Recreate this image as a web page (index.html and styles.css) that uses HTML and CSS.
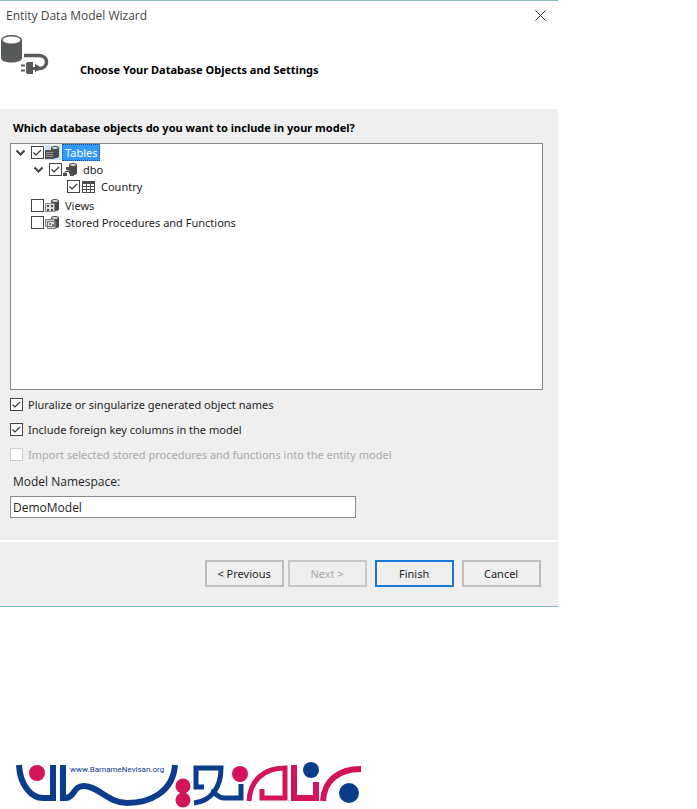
FILE: index.html
```html
<!DOCTYPE html>
<html lang="en">
<head>
  <meta charset="UTF-8">
  <meta name="viewport" content="width=device-width, initial-scale=1.0">
  <title>Entity Data Model Wizard</title>
  <link rel="stylesheet" href="styles.css">
</head>
<body>
  <form class="wizard">
    <div class="titlebar">
      <span>Entity Data Model Wizard</span>
      <button type="button" class="close" aria-label="Close">
        <svg width="11" height="11" viewBox="0 0 11 11"><path d="M.5 .5l10 10M10.5 .5l-10 10" stroke="#333" fill="none"/></svg>
      </button>
    </div>

    <header class="step">
      <svg width="50" height="44" viewBox="0 0 50 44">
        <path d="M1 6v18c0 6 21 6 21 0V6z" fill="#58595b"/>
        <ellipse cx="11.5" cy="6" rx="10.5" ry="5" fill="#58595b"/>
        <ellipse cx="11.5" cy="6" rx="9" ry="3.5" fill="#fff"/>
        <path d="M24 21.500h15c10 0 10 13 0 13h-2" fill="none" stroke="#58595b" stroke-width="3.500"/>
        <path d="M26 29h1v-1h6v12h-6v-1h-1zM33 33h2v3h-2zM35 30l4 2v4l-4 2zM21 30.500h4v2h-4zM21 35.500h4v2h-4z" fill="#58595b"/>
      </svg>
      <h1>Choose Your Database Objects and Settings</h1>
    </header>

    <div class="content">
      <h2>Which database objects do you want to include in your model?</h2>

      <ul class="tree">
        <li>
          <div class="node">
            <svg class="arrow" viewBox="0 0 9 9"><path d="M.5 2.500l4 4 4-4"/></svg>
            <input type="checkbox" id="tables" checked>
            <svg class="icon lit" viewBox="0 0 16 15"><use href="#db"/><path d="M0 5h9v9H0z" fill="#505053"/><path d="M1 7.500h7M1 9.500h7M1 11.500h7" stroke="#8d9399"/></svg>
            <label for="tables" class="selected">Tables</label>
          </div>
          <ul>
            <li>
              <div class="node">
                <svg class="arrow" viewBox="0 0 9 9"><path d="M.5 2.500l4 4 4-4"/></svg>
                <input type="checkbox" id="dbo" checked>
                <svg class="icon" viewBox="0 0 16 15"><use href="#db"/><path d="M3 5h4v3H3zM0 11h4v3H0zM7 11h4v3H7z" fill="#505053"/><path d="M5 8v2M2 11v-1.500h7v1.500" fill="none" stroke="#505053"/></svg>
                <label for="dbo">dbo</label>
              </div>
              <ul>
                <li>
                  <div class="node">
                    <span class="arrow"></span>
                    <input type="checkbox" id="country" checked>
                    <svg class="icon" viewBox="0 0 16 15"><path d="M1 2h13v12H1z" fill="#4a4a4d"/><path d="M2 5h3v2H2zM6 5h3v2H6zM10 5h3v2h-3zM2 8h3v2H2zM6 8h3v2H6zM10 8h3v2h-3zM2 11h3v2H2zM6 11h3v2H6zM10 11h3v2h-3z" fill="#fff"/></svg>
                    <label for="country">Country</label>
                  </div>
                </li>
              </ul>
            </li>
          </ul>
        </li>
        <li>
          <div class="node">
            <span class="arrow"></span>
            <input type="checkbox" id="views">
            <svg class="icon" viewBox="0 0 16 15"><use href="#db"/><path d="M.5 5.500h9v8h-9z" fill="#ddd" stroke="#888"/><path d="M2 7h2v2H2zM6 7h2v2H6zM2 11h2v2H2zM6 11h2v2H6z" fill="#505053"/></svg>
            <label for="views">Views</label>
          </div>
        </li>
        <li>
          <div class="node">
            <span class="arrow"></span>
            <input type="checkbox" id="procs">
            <svg class="icon" viewBox="0 0 16 15"><use href="#db"/><path d="M.5 4.500h9v7h-9zM2.500 6.500h8v7h-8z" fill="#ddd" stroke="#777"/><path d="M4 8h2v2H4zM7 9h2v3H7z" fill="#777"/></svg>
            <label for="procs">Stored Procedures and Functions</label>
          </div>
        </li>
      </ul>

      <div class="option">
        <input type="checkbox" id="pluralize" checked>
        <label for="pluralize">Pluralize or singularize generated object names</label>
      </div>
      <div class="option">
        <input type="checkbox" id="foreign" checked>
        <label for="foreign">Include foreign key columns in the model</label>
      </div>
      <div class="option">
        <input type="checkbox" id="import" disabled>
        <label for="import">Import selected stored procedures and functions into the entity model</label>
      </div>

      <label class="namespace-label" for="namespace">Model Namespace:</label>
      <input type="text" class="namespace" id="namespace" value="DemoModel">
    </div>

    <footer class="actions">
      <button type="button">&lt; Previous</button>
      <button type="button" disabled>Next &gt;</button>
      <button type="submit" class="primary">Finish</button>
      <button type="button">Cancel</button>
    </footer>
  </form>

  <svg class="logo" width="352" height="47" viewBox="14 762 352 47" role="img" aria-label="Barname Nevisan">
    <g fill="none" stroke="#0b3d8c" stroke-width="6">
      <path d="M19 765C20 786 32 798 43 798H53V765"/>
      <path d="M63 765V798H66C75 797 73 786 84 786C98 786 108 803 127 803C150 803 173 792 175 765"/>
      <path d="M204 787H196V768H221C221 788 211 801 194 803M211 791C216 793 218 798 224 798H241V784" stroke-width="5"/>
    </g>
    <g fill="none" stroke="#d3145a" stroke-width="6">
      <path d="M249 801C250 782 262 768 285 768V798H262V789" stroke-width="5"/>
      <path d="M294 765V798H316V782M323 801C324 781 338 769 361 769"/>
    </g>
    <g fill="#d3145a">
      <circle cx="37" cy="773" r="8"/>
      <circle cx="183" cy="786" r="7.5"/>
      <circle cx="183" cy="800" r="7.5"/>
      <circle cx="240" cy="774" r="8"/>
    </g>
    <g fill="#0b3d8c">
      <circle cx="311" cy="770" r="8"/>
      <circle cx="349" cy="793" r="10"/>
    </g>
    <text x="70" y="772">www.BarnameNevisan.org</text>
  </svg>

  <!-- shared database cylinder for the tree icons -->
  <svg width="0" height="0" class="defs">
    <defs>
      <g id="db">
        <path d="M6 3v8c0 3 8 3 8 0V3z" fill="#4a4a4d"/>
        <ellipse cx="10" cy="3" rx="4" ry="2" fill="#4a4a4d"/>
        <ellipse cx="10" cy="3" rx="3" ry="1" fill="#ddd"/>
      </g>
    </defs>
  </svg>
</body>
</html>
```
FILE: styles.css
```css
* {
  box-sizing: border-box;
}
body {
  margin: 0;
  background: #fff;
  color: #1e1e1e;
  font: 11px/17px "Noto Sans", "Open Sans", sans-serif;
}
h1, h2 {
  margin: 0;
  font-size: 11px;
  color: #000;
}
ul {
  list-style: none;
  margin: 0;
  padding: 0;
}
svg {
  display: block;
}
.wizard {
  width: 80%;
  border-top: 1px solid #8fb9bb;
  border-bottom: 1px solid #7fc4c4;
}
.titlebar {
  display: flex;
  justify-content: space-between;
  align-items: center;
  height: 29px;
  padding: 0 12px 0 6px;
  color: #444;
  font: 12px/17px "Open Sans", sans-serif;
}
.close {
  padding: 0;
  border: none;
  background: none;
}
.step {
  display: flex;
  gap: 30px;
  height: 79px;
  padding-top: 4px;
}
.step h1 {
  padding-top: 27px;
}
.content {
  padding: 10px 15px 22px 10px;
  background: #efefef;
}
.content h2 {
  padding: 0 0 7px 3px;
}

/* objects tree */
.tree {
  height: 247px;
  margin-bottom: 5px;
  padding: 0 5px;
  border: 1px solid #828790;
  background: #fff;
}
.tree ul {
  padding: 0 0 1px 18px;
}
.node {
  display: flex;
  align-items: center;
  height: 17px;
}
.arrow {
  width: 9px;
  height: 9px;
  margin-right: 6px;
  fill: none;
  stroke: #444;
  stroke-width: 2;
}
.icon {
  width: 16px;
  height: 15px;
  margin: 0 1px;
}
.lit {
  background: #cce4f7;
}
.node label {
  padding: 0 3px;
}
.node .selected {
  background: #3399ff;
  color: #fff;
  outline: 1px dotted #1b4f86;
  outline-offset: -1px;
}

input[type="checkbox"] {
  appearance: none;
  flex: none;
  width: 13px;
  height: 13px;
  margin: 0;
  border: 1px solid #444;
  background: #fff;
}
input[type="checkbox"]:checked {
  background: #fff url("data:image/svg+xml,%3Csvg xmlns='http://www.w3.org/2000/svg' viewBox='0 0 11 11'%3E%3Cpath d='M1.500 5.500l2.500 2.500 5-5' fill='none' stroke='%23333' stroke-width='1.200'/%3E%3C/svg%3E");
}
input[type="checkbox"]:disabled {
  border-color: #ccc;
}
.option {
  display: flex;
  align-items: center;
  gap: 5px;
  height: 18px;
  margin-bottom: 7px;
}
input:disabled + label {
  color: #aaa;
}
.namespace-label {
  display: block;
  padding: 3px 3px 6px;
  font: 12px/17px "Open Sans", sans-serif;
}
.namespace {
  display: block;
  width: 65%;
  height: 22px;
  padding: 0 2px;
  border: 1px solid #8a8a8a;
  background: #fff;
  color: inherit;
  font: 12px/17px "Open Sans", sans-serif;
}

.actions {
  display: flex;
  justify-content: flex-end;
  gap: 8px;
  padding: 18px 17px 19px;
  border-top: 2px solid #fff;
  background: #efefef;
}
.actions button {
  width: 79px;
  height: 27px;
  padding: 0;
  border: 2px solid #bdbdbd;
  background: #efefef;
  color: #1e1e1e;
  font: inherit;
}
.actions button:first-child {
  margin-right: -4px;
}
.actions button:disabled {
  color: #aaa;
  border-color: #c8c8c8;
}
.actions .primary {
  border-color: #1a7ad4;
}

.logo {
  margin: 155px 0 0 14px;
}
.logo text {
  fill: #0b3d8c;
  font: 8px Roboto, sans-serif;
}
.defs {
  position: absolute;
}
```
